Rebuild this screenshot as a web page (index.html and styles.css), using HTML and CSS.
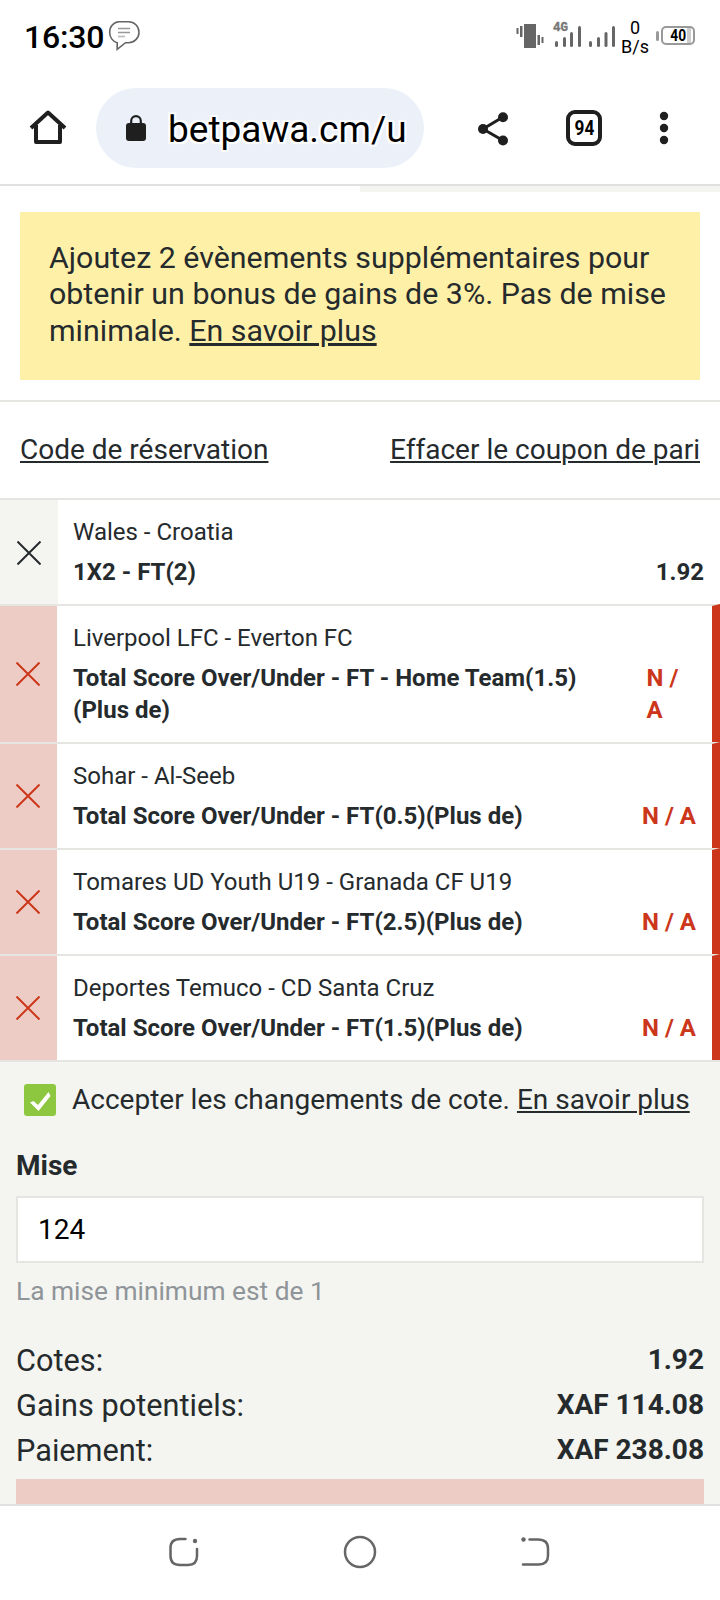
FILE: index.html
```html
<!DOCTYPE html>
<html lang="fr">
<head>
<meta charset="utf-8">
<title>betPawa</title>
<link rel="stylesheet" href="styles.css">
</head>
<body>
<header class="status">
  <span class="clock">16:30</span>
  <svg class="msg" width="32" height="32" viewBox="0 0 32 32" fill="none" stroke="#666" stroke-width="1.6"><path d="M11 1.700h9.500a9.800 9.800 0 0 1 0 21h-3L9.200 29.300V22.700C4.500 21.500 1.700 17 1.700 12.500A10 10 0 0 1 11 1.700z"/><path d="M10 8.500h12M10 12.500h12" stroke="#999" stroke-width="1.700"/><path d="M10 16.500h7" stroke="#bbb" stroke-width="1.700"/></svg>
  <svg class="signals" width="104" height="34" viewBox="0 0 104 34"><g fill="#666"><path d="M8 5h12v24H8zM0.500 9h2v6h-2zM4 7h2.500v11H4zM21.500 16h2.500v10h-2.500zM25.500 18h2v6h-2z"/><g><rect x="39" y="22" width="3" height="6" rx="1.500"/><rect x="47" y="18" width="3" height="10" rx="1.500"/><rect x="54" y="13" width="3" height="15" rx="1.500"/><rect x="62" y="7" width="3" height="21" rx="1.500"/><rect x="73" y="22" width="3" height="6" rx="1.500"/><rect x="81" y="18" width="3" height="10" rx="1.500"/><rect x="88.500" y="13" width="3" height="15" rx="1.500"/><rect x="96" y="7" width="3" height="21" rx="1.500"/></g></g><text class="net" x="37" y="12" textLength="15" lengthAdjust="spacingAndGlyphs">4G</text></svg>
  <span class="rate">0<br>B/s</span>
  <span class="battery"><i class="tip"></i><b class="cell"><span class="narrow">40</span></b></span>
</header>
<nav class="toolbar">
  <svg class="home" width="40" height="40" viewBox="0 0 40 40" fill="none" stroke="#1f1f1f" stroke-width="4" stroke-linejoin="round"><path d="M3 20 20 4.500 37 20M8 17v17h24V17"/></svg>
  <div class="omnibox">
    <svg width="20" height="26" viewBox="0 0 20 26"><rect y="8" width="20" height="18" rx="3" fill="#1f1f1f"/><path d="M5.200 10V6a4.800 4.800 0 0 1 9.600 0v4" fill="none" stroke="#1f1f1f" stroke-width="2.200"/></svg>
    <span class="url">betpawa.cm/u</span>
  </div>
  <svg class="share" width="32" height="34" viewBox="0 0 32 34"><path d="M26 5 6 17l20 11.500" fill="none" stroke="#1f1f1f" stroke-width="3"/><g fill="#1f1f1f"><circle cx="26" cy="5.200" r="5"/><circle cx="6" cy="17" r="5"/><circle cx="26" cy="28.500" r="5"/></g></svg>
  <span class="tabs"><span class="narrow">94</span></span>
  <svg class="more" width="10" height="34" viewBox="0 0 10 34" fill="#1f1f1f"><circle cx="5" cy="5" r="4.200"/><circle cx="5" cy="17" r="4.200"/><circle cx="5" cy="29" r="4.200"/></svg>
</nav>
<main>
  <div class="tabstrip"><i></i></div>
  <p class="bonus">Ajoutez 2 évènements supplémentaires pour<br>obtenir un bonus de gains de 3%. Pas de mise<br>minimale. <a>En savoir plus</a></p>
  <div class="links"><a>Code de réservation</a><a>Effacer le coupon de pari</a></div>
  <ul class="bets">
    <li class="bet">
      <span class="del"><svg width="24" height="24" viewBox="0 0 24 24"><path d="M.5.5l23 23M23.500.5l-23 23"/></svg></span>
      <div class="info"><div>Wales - Croatia</div><div class="pick"><b>1X2 - FT(2)</b><b class="odd">1.92</b></div></div>
    </li>
    <li class="bet off">
      <span class="del"><svg width="24" height="24" viewBox="0 0 24 24"><path d="M.5.5l23 23M23.500.5l-23 23"/></svg></span>
      <div class="info"><div>Liverpool LFC - Everton FC</div><div class="pick"><b>Total Score Over/Under - FT - Home Team(1.5)<br>(Plus de)</b><b class="odd split">N /<br>A</b></div></div>
    </li>
    <li class="bet off">
      <span class="del"><svg width="24" height="24" viewBox="0 0 24 24"><path d="M.5.5l23 23M23.500.5l-23 23"/></svg></span>
      <div class="info"><div>Sohar - Al-Seeb</div><div class="pick"><b>Total Score Over/Under - FT(0.5)(Plus de)</b><b class="odd">N / A</b></div></div>
    </li>
    <li class="bet off">
      <span class="del"><svg width="24" height="24" viewBox="0 0 24 24"><path d="M.5.5l23 23M23.500.5l-23 23"/></svg></span>
      <div class="info"><div>Tomares UD Youth U19 - Granada CF U19</div><div class="pick"><b>Total Score Over/Under - FT(2.5)(Plus de)</b><b class="odd">N / A</b></div></div>
    </li>
    <li class="bet off">
      <span class="del"><svg width="24" height="24" viewBox="0 0 24 24"><path d="M.5.5l23 23M23.500.5l-23 23"/></svg></span>
      <div class="info"><div>Deportes Temuco - CD Santa Cruz</div><div class="pick"><b>Total Score Over/Under - FT(1.5)(Plus de)</b><b class="odd">N / A</b></div></div>
    </li>
  </ul>
  <section class="slip">
    <div class="accept"><svg width="32" height="32" viewBox="0 0 32 32"><rect width="32" height="32" rx="3" fill="#8dc63f"/><path d="M6 18.500 9.500 17l4.500 4L24.500 8 26.500 12 14.500 27z" fill="#fff"/></svg><span>Accepter les changements de cote. <a>En savoir plus</a></span></div>
    <div class="label">Mise</div>
    <div class="stake">124</div>
    <div class="hint">La mise minimum est de 1</div>
    <dl class="totals">
      <div><dt>Cotes:</dt><dd>1.92</dd></div>
      <div><dt>Gains potentiels:</dt><dd>XAF 114.08</dd></div>
      <div><dt>Paiement:</dt><dd>XAF 238.08</dd></div>
    </dl>
    <div class="place"></div>
  </section>
</main>
<footer class="sysnav">
  <svg width="34" height="34" viewBox="0 0 34 34"><path d="M18.500 4H13Q3.500 4 3.500 13v8Q3.500 30 13 30h8Q30 30 30 21v-7"/><circle class="dot" cx="28" cy="6" r="2.200"/></svg>
  <svg width="34" height="34" viewBox="0 0 34 34"><circle cx="17" cy="17" r="15"/></svg>
  <svg width="34" height="34" viewBox="0 0 34 34"><path d="M10.500 4.500H19q10 0 10 9v7q0 9-9 9H4"/><circle class="dot" cx="4.500" cy="4.500" r="2.200"/></svg>
</footer>
</body>
</html>
```
FILE: styles.css
```css
* { box-sizing: border-box; margin: 0; padding: 0; }
body { width: 720px; height: 1600px; overflow: hidden; display: flex; flex-direction: column; background: #fff; color: #252a2d; font-family: Roboto, sans-serif; }
a { text-decoration: underline; text-decoration-thickness: 2px; text-underline-offset: 2px; }
.narrow { display: inline-block; transform: scaleX(.86); }

.status { height: 72px; display: flex; align-items: flex-start; color: #000; }
.clock { font-size: 32px; font-weight: 500; line-height: 38px; margin: 18px 0 0 24px; width: 84px; letter-spacing: -.2px; white-space: nowrap; }
.msg { margin-top: 20px; }
.signals { margin: 19px 0 0 376px; }
.net { font: 700 13px "Liberation Mono", monospace; fill: #777; stroke: #777; stroke-width: .4; }
.rate { width: 30px; margin: 18px 0 0 0; font-size: 18px; line-height: 19px; text-align: center; }
.battery { display: flex; align-items: center; margin: 26px 0 0 6px; }
.tip { width: 3px; height: 10px; border-radius: 2px; background: #999; margin-right: 2px; }
.cell { width: 34px; height: 19px; border: 2px solid #999; border-radius: 5px; font-size: 16px; line-height: 16px; text-align: center; background: linear-gradient(90deg, #fff 24px, #ccc 24px, #ccc 28px, #fff 28px); }

.toolbar { height: 114px; display: flex; align-items: flex-start; border-bottom: 2px solid #e1e1e1; color: #000; }
.home { margin: 36px 0 0 28px; }
.omnibox { margin: 16px 0 0 28px; width: 328px; height: 80px; border-radius: 40px; background: #ecf0f9; display: flex; align-items: center; padding-left: 30px; }
.url { margin: 3px 0 0 22px; font-size: 37px; white-space: nowrap; text-shadow: 0 0 2px #fff, 2px 2px 1px #fff, -2px -2px 1px #fff, 2px -2px 1px #fff, -2px 2px 1px #fff; }
.share { margin: 40px 0 0 53px; }
.tabs { margin: 38px 0 0 57px; width: 36px; height: 36px; border: 4px solid #1f1f1f; border-radius: 9px; font-size: 20px; font-weight: 700; line-height: 28px; display: flex; justify-content: center; }
.more { margin: 39px 0 0 57px; }

main { height: 1318px; overflow: hidden; }
.tabstrip { height: 6px; padding-left: 360px; }
.tabstrip i { display: block; height: 6px; background: #f4f5f0; }
.bonus { margin: 20px 20px; height: 168px; background: #fff0a8; padding: 27.500px 0 0 29px; font-size: 30.370px; line-height: 36.500px; white-space: nowrap; }
.bonus a { text-decoration-thickness: 3px; }
.links { height: 98px; border-top: 2px solid #e5e5e1; padding: 0 20px; display: flex; justify-content: space-between; font-size: 28px; line-height: 96px; }

.bets { list-style: none; border-bottom: 2px solid #e5e5e1; }
.bet { display: flex; border-top: 2px solid #e5e5e1; min-height: 106px; font-size: 24px; line-height: 32px; }
.del { width: 58px; padding-top: 1px; display: flex; align-items: center; justify-content: center; background: #f4f5f0; stroke: #252a2d; stroke-width: 2; fill: none; }
.info { flex: 1; padding: 16px 16px 16px 15px; white-space: nowrap; }
.pick { display: flex; justify-content: space-between; margin-top: 8px; }
.off { border-right: 8px solid #cc371b; }
.off .del { width: 57px; padding: 0 1px 0 0; background: #edccc5; stroke: #cc371b; }
.off .info { padding-left: 16px; }
.off .odd { color: #cc371b; }
.split { width: 49.400px; }

.slip { height: 444px; background: #f4f5f0; padding: 0 16px; }
.accept { display: flex; align-items: center; padding: 22px 0 0 8px; height: 54px; font-size: 28px; line-height: 32px; white-space: nowrap; }
.accept span { margin-left: 16px; }
.label { margin-top: 33px; height: 47px; font-size: 28px; line-height: 33px; font-weight: 700; }
.stake { height: 67px; border: 2px solid #e5e5e1; background: #fff; color: #000; padding-left: 20px; font-size: 28px; line-height: 63px; }
.hint { font-size: 26.300px; line-height: 32px; margin-top: 12px; color: #8f9499; }
.totals { margin-top: 31px; }
.totals div { display: flex; justify-content: space-between; height: 45px; }
.totals dt { font-size: 30.700px; line-height: 45px; }
.totals dd { font-size: 28px; font-weight: 700; line-height: 44px; }
.place { height: 30px; background: #edccc5; margin-top: 6px; }

.sysnav { height: 96px; border-top: 2px solid #e1e1e1; background: #fff; display: flex; justify-content: space-between; padding: 29px 167px 0; fill: none; stroke: #666; stroke-width: 2.500; stroke-linecap: round; }
.dot { fill: #666; stroke: none; }
```
